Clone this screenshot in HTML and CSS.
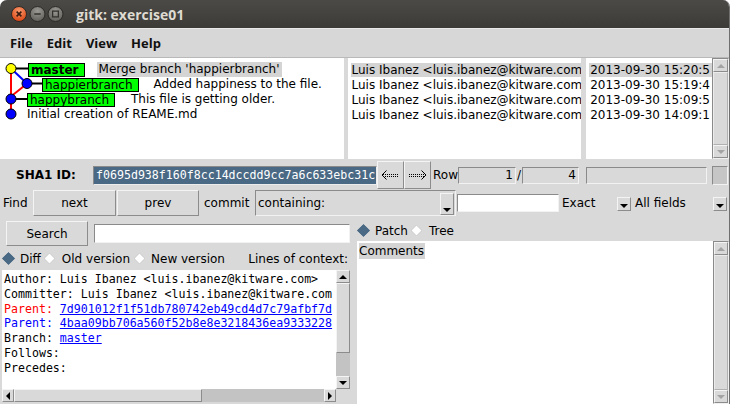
FILE: index.html
```html
<!DOCTYPE html>
<html>
<head>
<meta charset="utf-8">
<title>gitk: exercise01</title>
<link rel="stylesheet" href="styles.css">
</head>
<body>
<div class="win">
  <div class="titlebar">
    <svg class="wbtns" width="54" height="18" viewBox="0 0 54 18">
      <defs>
        <radialGradient id="gc" cx="50%" cy="30%" r="65%"><stop offset="0" stop-color="#f89a6e"/><stop offset="1" stop-color="#dc4a18"/></radialGradient>
        <radialGradient id="gg" cx="50%" cy="30%" r="65%"><stop offset="0" stop-color="#9a9993"/><stop offset="1" stop-color="#65645f"/></radialGradient>
      </defs>
      <circle cx="8" cy="9" r="7.5" fill="url(#gc)" stroke="#2c2a27" stroke-width="1"/>
      <path d="M5.6 6.6 L10.4 11.4 M10.4 6.6 L5.6 11.4" stroke="#3a1c10" stroke-width="1.6"/>
      <circle cx="26.5" cy="9" r="7.5" fill="url(#gg)" stroke="#2c2a27" stroke-width="1"/>
      <path d="M23.3 9 L29.7 9" stroke="#33322e" stroke-width="1.6"/>
      <circle cx="44.5" cy="9" r="7.5" fill="url(#gg)" stroke="#2c2a27" stroke-width="1"/>
      <rect x="41.6" y="6.1" width="5.8" height="5.8" fill="none" stroke="#33322e" stroke-width="1.3"/>
    </svg>
    <span class="title">gitk: exercise01</span>
  </div>

  <div class="menubar">
    <span class="menu">File</span><span class="menu">Edit</span><span class="menu">View</span><span class="menu">Help</span>
  </div>

  <div class="toppanes">
    <div class="pane graph">
      <svg class="gsvg" width="60" height="70" viewBox="0 0 60 70">
        <path d="M11 10.5 L28 10.5 M27 25.5 L42 25.5 M11 41 L27 41" stroke="#000" stroke-width="2"/>
        <path d="M11 10.5 L11 56" stroke="#ff0000" stroke-width="2"/>
        <path d="M26 26.5 L11.5 38" stroke="#ff0000" stroke-width="2"/>
        <path d="M11 10.5 L27 25.5" stroke="#0000ff" stroke-width="2"/>
        <circle cx="11" cy="10.5" r="5" fill="#ffff00" stroke="#000" stroke-width="1"/>
        <circle cx="27" cy="25.5" r="5" fill="#0000ff" stroke="#000" stroke-width="1"/>
        <circle cx="11" cy="41" r="5" fill="#0000ff" stroke="#000" stroke-width="1"/>
        <circle cx="11" cy="56" r="5" fill="#0000ff" stroke="#000" stroke-width="1"/>
      </svg>
      <div class="grow"><span class="ref cur l1">master</span><span class="msg hl m1">Merge branch 'happierbranch'</span></div>
      <div class="grow"><span class="ref l2">happierbranch</span><span class="msg m2">Added happiness to the file.</span></div>
      <div class="grow"><span class="ref l3">happybranch</span><span class="msg m3">This file is getting older.</span></div>
      <div class="grow"><span class="msg m4">Initial creation of REAME.md</span></div>
    </div>
    <div class="pane authors">
      <div class="lrow"><span class="hlrow">Luis Ibanez &lt;luis.ibanez@kitware.com&gt;</span></div>
      <div class="lrow">Luis Ibanez &lt;luis.ibanez@kitware.com&gt;</div>
      <div class="lrow">Luis Ibanez &lt;luis.ibanez@kitware.com&gt;</div>
      <div class="lrow">Luis Ibanez &lt;luis.ibanez@kitware.com&gt;</div>
    </div>
    <div class="pane dates">
      <div class="lrow"><span class="hlrow">2013-09-30 15:20:5</span></div>
      <div class="lrow">2013-09-30 15:19:4</div>
      <div class="lrow">2013-09-30 15:09:5</div>
      <div class="lrow">2013-09-30 14:09:1</div>
    </div>
    <div class="vscroll dis tall">
      <div class="sarrow up"></div><div class="slider"></div><div class="sarrow dn"></div>
    </div>
  </div>

  <div class="sharow">
    <span class="shalbl">SHA1 ID:</span>
    <div class="shaent">f0695d938f160f8cc14dccdd9cc7a6c633ebc31c</div>
    <div class="abtn">
      <svg width="25" height="26" viewBox="0 0 25 26"><path d="M8.5 8.5 L4 13 L8.5 17.5" fill="none" stroke="#000" stroke-width="1"/><path d="M5 12.5 H21 M5 14.5 H21" stroke="#000" stroke-width="1" stroke-dasharray="1 1"/></svg>
    </div>
    <div class="abtn">
      <svg width="25" height="26" viewBox="0 0 25 26"><path d="M16.5 8.5 L21 13 L16.5 17.5" fill="none" stroke="#000" stroke-width="1"/><path d="M4 12.5 H20 M4 14.5 H20" stroke="#000" stroke-width="1" stroke-dasharray="1 1"/></svg>
    </div>
    <span class="rowlbl">Row</span>
    <div class="fld f1">1</div><span class="slash">/</span><div class="fld f2">4</div>
    <div class="fld f3"></div>
    <div class="sq"></div>
  </div>

  <div class="findrow">
    <span class="findlbl">Find</span>
    <div class="btn bnext">next</div>
    <div class="btn bprev">prev</div>
    <span class="commitlbl">commit</span>
    <div class="combo cmain"><span class="ctext1">containing:</span><span class="cind big"></span></div>
    <div class="fent"></div>
    <div class="combo cexact"><span class="ctext1">Exact</span><span class="cind"></span></div>
    <div class="combo call"><span class="ctext1">All fields</span><span class="cind"></span></div>
  </div>

  <div class="lower">
    <div class="lcol">
      <div class="searchrow">
        <div class="btn bsearch">Search</div>
        <div class="sent"></div>
      </div>
      <div class="diffrow">
        <span class="radio"><span class="dia on"></span>Diff</span>
        <span class="radio"><span class="dia"></span>Old version</span>
        <span class="radio"><span class="dia"></span>New version</span>
        <span class="ctx">Lines of context:</span>
      </div>
      <div class="textgrid">
        <div class="ctextpane">
          <div class="tl">Author: Luis Ibanez &lt;luis.ibanez@kitware.com&gt;</div>
          <div class="tl">Committer: Luis Ibanez &lt;luis.ibanez@kitware.com</div>
          <div class="tl"><span class="red">Parent: </span><span class="link">7d901012f1f51db780742eb49cd4d7c79afbf7d</span></div>
          <div class="tl"><span class="blue">Parent: </span><span class="link">4baa09bb706a560f52b8e8e3218436ea9333228</span></div>
          <div class="tl">Branch: <span class="link">master</span></div>
          <div class="tl">Follows:</div>
          <div class="tl">Precedes:</div>
        </div>
        <div class="vscroll en">
          <div class="sarrow up"></div><div class="slider s1"></div><div class="trough"></div><div class="sarrow dn"></div>
        </div>
        <div class="hscroll">
          <div class="sarrow lf"></div><div class="slider s2"></div><div class="trough"></div><div class="sarrow rt"></div>
        </div>
        <div class="corner"></div>
      </div>
    </div>
    <div class="rcol">
      <div class="ptrow">
        <span class="radio"><span class="dia on"></span>Patch</span>
        <span class="radio"><span class="dia"></span>Tree</span>
      </div>
      <div class="cpane">
        <div class="ctree"><span class="hlc">Comments</span></div>
        <div class="vscroll dis">
          <div class="sarrow up"></div><div class="slider"></div><div class="sarrow dn"></div>
        </div>
      </div>
    </div>
  </div>
</div>
</body>
</html>
```

FILE: styles.css
```css
* { box-sizing: border-box; }
html, body { margin: 0; padding: 0; background: #ffffff; }
body {
  width: 730px; height: 404px; overflow: hidden;
  font-family: "DejaVu Sans", sans-serif; font-size: 12px; color: #000;
}
.win {
  width: 730px; height: 404px; background: #d9d9d9;
  border-radius: 7px 7px 0 0; overflow: hidden;
  display: flex; flex-direction: column;
  border-right: 1px solid #6f6f6f;
}

/* title bar */
.titlebar {
  height: 28px; flex: none; display: flex; align-items: center;
  padding-left: 11px;
  background: linear-gradient(#4b4a46, #3c3b37);
}
.wbtns { flex: none; }
.title {
  margin-left: 11px; font-family: "Open Sans", sans-serif; font-weight: 700;
  font-size: 14px; color: #dfdbd2;
}

/* menu */
.menubar {
  height: 30px; flex: none; display: flex; align-items: center;
  padding-left: 3px; background: #d7d7d7;
  border-top: 1px solid #e9e9e9; border-bottom: 1px solid #b9b9b9;
}
.menu {
  font-family: "Open Sans", sans-serif; font-weight: 700; font-size: 13px;
  padding: 0 7px; color: #111;
}

/* top panes */
.toppanes { height: 101px; flex: none; display: flex; }
.pane { background: #fff; height: 101px; overflow: hidden; padding-top: 4px; white-space: nowrap; }
.graph { width: 344px; position: relative; }
.gsvg { position: absolute; left: 0; top: 0; }
.grow { height: 15px; display: flex; align-items: center; position: relative; }
.ref {
  background: #00ff00; border: 1px solid #000; height: 14px; line-height: 12px;
  padding: 0 5px 0 2px;
}
.ref.cur { font-weight: 700; }
.l1 { margin-left: 28px; }
.l2 { margin-left: 42px; }
.l3 { margin-left: 27px; }
.msg { line-height: 15px; }
.hl { background: #d4d4d4; padding: 0 2px; }
.m1 { margin-left: 12px; }
.m2 { margin-left: 15px; }
.m3 { margin-left: 16px; }
.m4 { margin-left: 27px; }

.authors { width: 234px; margin-left: 4px; padding-left: 2px; }
.dates { width: 126px; margin-left: 5px; padding-left: 2px; }
.lrow { height: 15px; line-height: 15px; padding-left: 2px; }
.hlrow { display: block; background: #d4d4d4; margin-left: -1px; padding-left: 1px; height: 14px; line-height: 14px; margin-top: 1px; }

/* scrollbars */
.vscroll {
  display: flex; flex-direction: column; background: #c3c3c3;
  border: 1px solid #a6a6a6;
}
.vscroll.tall { width: 17px; height: 101px; border-color: #8a8a8a #f0f0f0 #f0f0f0 #8a8a8a; }
.sarrow {
  flex: none; height: 13px; background: #d9d9d9; position: relative;
  border: 1px solid; border-color: #f4f4f4 #8c8c8c #8c8c8c #f4f4f4;
}
.hscroll .sarrow { height: auto; width: 12px; }
.sarrow::before {
  content: ""; position: absolute; left: 50%; top: 50%; width: 0; height: 0;
  transform: translate(-50%, -50%);
}
.sarrow.up::before { border-left: 4px solid transparent; border-right: 4px solid transparent; border-bottom: 4px solid #000; }
.sarrow.dn::before { border-left: 4px solid transparent; border-right: 4px solid transparent; border-top: 4px solid #000; }
.sarrow.lf::before { border-top: 4px solid transparent; border-bottom: 4px solid transparent; border-right: 4px solid #000; }
.sarrow.rt::before { border-top: 4px solid transparent; border-bottom: 4px solid transparent; border-left: 4px solid #000; }
.dis .sarrow.up::before { border-bottom-color: #a3a3a3; }
.dis .sarrow.dn::before { border-top-color: #a3a3a3; }
.slider {
  flex: 1; background: #d9d9d9; border: 1px solid; border-color: #f4f4f4 #8c8c8c #8c8c8c #f4f4f4;
}
.dis .slider { border-color: #ececec #b0b0b0 #b0b0b0 #ececec; }
.trough { background: #c3c3c3; }
.s1 { flex: none; height: 70px; }
.vscroll.en .trough { flex: 1; }

/* sha row */
.sharow { height: 31px; flex: none; display: flex; align-items: center; padding-left: 16px; padding-top: 1px; }
.shalbl { font-weight: 700; width: 77px; flex: none; }
.shaent {
  width: 284px; height: 19px; flex: none; background: #4a6984; color: #fff;
  font-family: "DejaVu Sans Mono", monospace; font-size: 11.6px; line-height: 17px;
  padding-left: 2px; border: 1px solid; border-color: #8a8a8a #ececec #ececec #8a8a8a;
  overflow: hidden; white-space: nowrap;
}
.abtn {
  width: 27px; height: 28px; flex: none; display: flex; align-items: center; justify-content: center;
  border: 1px solid; border-color: #f4f4f4 #8c8c8c #8c8c8c #f4f4f4;
}
.rowlbl { margin-left: 2px; width: 25px; flex: none; }
.fld {
  height: 17px; flex: none; line-height: 15px; text-align: right; padding-right: 2px;
  border: 1px solid; border-color: #8a8a8a #f2f2f2 #f2f2f2 #8a8a8a; background: #d9d9d9;
}
.f1 { width: 58px; }
.slash { width: 6px; flex: none; text-align: center; }
.f2 { width: 57px; }
.f3 { width: 121px; margin-left: 7px; }
.sq {
  width: 16px; height: 19px; margin-left: 5px; flex: none; background: #c6c6c6;
  border: 1px solid; border-color: #8a8a8a #f2f2f2 #f2f2f2 #8a8a8a;
}

/* find row */
.findrow { height: 26px; flex: none; display: flex; align-items: center; padding-left: 3px; }
.findlbl { width: 30px; flex: none; }
.btn {
  height: 26px; flex: none; display: flex; align-items: center; justify-content: center;
  background: #d9d9d9; border: 1px solid; border-color: #f4f4f4 #8c8c8c #8c8c8c #f4f4f4;
}
.bnext { width: 83px; }
.bprev { width: 82px; margin-left: 1px; }
.commitlbl { margin: 0 6px 0 5px; width: 45px; flex: none; }
.combo {
  flex: none; display: flex; position: relative; align-items: center;
}
.ctext1 { padding-left: 2px; flex: 1; white-space: nowrap; }
.cmain {
  width: 201px; height: 26px;
  border: 1px solid; border-color: #8a8a8a #f2f2f2 #f2f2f2 #8a8a8a;
}
.cind {
  width: 14px; height: 14px; flex: none; position: relative; align-self: flex-end;
  margin-bottom: 2px; margin-right: 1px;
  border: 1px solid; border-color: #f4f4f4 #8c8c8c #8c8c8c #f4f4f4;
}
.cind.big { height: 22px; margin-bottom: 0; }
.cind::before {
  content: ""; position: absolute; left: 2px; bottom: 2px; width: 0; height: 0;
  border-left: 4px solid transparent; border-right: 4px solid transparent; border-top: 4px solid #000;
}
.fent {
  width: 102px; height: 18px; flex: none; background: #fff; margin-left: 1px;
  border: 1px solid; border-color: #8a8a8a #f2f2f2 #f2f2f2 #8a8a8a;
}
.cexact { width: 72px; height: 20px; margin-left: 1px; }
.call { width: 95px; height: 20px; margin-left: 1px; }

/* lower area */
.lower { flex: 1; display: flex; min-height: 0; }
.lcol { width: 352px; flex: none; display: flex; flex-direction: column; }
.searchrow { height: 25px; margin-top: 5px; flex: none; display: flex; align-items: center; }
.bsearch { width: 82px; height: 25px; margin-left: 6px; }
.sent {
  width: 256px; height: 19px; margin-left: 6px; background: #fff; flex: none;
  border: 1px solid; border-color: #8a8a8a #f2f2f2 #f2f2f2 #8a8a8a;
}
.diffrow { height: 23px; flex: none; display: flex; align-items: center; padding-left: 3px; padding-top: 2px; }
.radio { display: inline-flex; align-items: center; gap: 7px; margin-right: 4px; white-space: nowrap; }
.dia { width: 10px; height: 10px; display: inline-flex; align-items: center; justify-content: center; flex: none; }
.dia::before {
  content: ""; width: 7px; height: 7px; transform: rotate(45deg);
  background: #fff; border: 1px solid #c9c9c9;
}
.dia.on::before { background: #4a6984; border-color: #4a6984; }
.ctx { margin-left: auto; margin-right: 4px; }

.textgrid {
  display: grid; grid-template-columns: 334px 14px; grid-template-rows: 119px 13px;
  margin-left: 2px; margin-top: 1px;
}
.ctextpane {
  background: #fff; overflow: hidden; white-space: nowrap;
  font-family: "DejaVu Sans Mono", monospace; font-size: 11.6px; line-height: 14.8px;
  padding: 2px 0 0 2px;
}
.red { color: #ff0000; }
.blue { color: #0000ff; }
.link { color: #0000ff; text-decoration: underline; }
.textgrid .vscroll { border: none; }
.hscroll { display: flex; background: #c3c3c3; }
.s2 { flex: none; width: 188px; }
.hscroll .trough { flex: 1; }
.corner { background: #d9d9d9; }

.rcol { width: 374px; margin-left: 4px; flex: none; display: flex; flex-direction: column; }
.ptrow { height: 25px; flex: none; display: flex; align-items: center; padding-left: 2px; padding-top: 4px; }
.cpane { flex: 1; display: flex; margin-left: 1px; min-height: 0; }
.ctree { width: 356px; background: #fff; padding: 2px 0 0 2px; flex: none; }
.hlc { background: #d4d4d4; display: inline-block; height: 16px; line-height: 16px; padding-right: 1px; }
.cpane .vscroll { width: 16px; flex: none; background: #d9d9d9; border-color: #8a8a8a #f0f0f0 #f0f0f0 #8a8a8a; }
.vscroll.dis { background: #d9d9d9; }
```
